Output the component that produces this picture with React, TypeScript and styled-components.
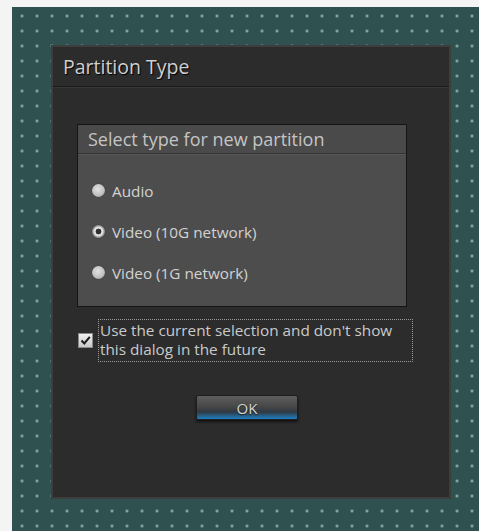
import React, { useState } from 'react';
import styled, { createGlobalStyle } from 'styled-components';

const GlobalStyle = createGlobalStyle`
  body {
    margin: 0;
    background: #f4f4f4;
    font-family: "Open Sans", "Noto Sans", sans-serif;
  }
`

const Desktop = styled.div`
  margin: 7px 0 0 12px;
  height: 524px;
  box-sizing: border-box;
  padding: 38px 0 0 39px;
  background-color: #2f5250;
  background-image: radial-gradient(circle, rgba(180, 210, 205, 0.8) 0.9px, transparent 1.7px);
  background-size: 15px 15px;
  background-position: 2.5px 1.5px;
`

const Dialog = styled.div`
  width: 400px;
  height: 454px;
  box-sizing: border-box;
  background: #2c2c2c;
  border: 2px solid #3d3d3d;
  display: flex;
  flex-direction: column;
`

const TitleBar = styled.div`
  height: 39px;
  display: flex;
  align-items: center;
  padding-left: 10px;
  border-bottom: 1px solid #181818;
  box-shadow: 0 1px 0 #383838;
  font-size: 19.5px;
  color: #cfcfcf;
  text-shadow: 1px 1px 1px #000;
`

const Body = styled.div`
  padding: 37px 0 0 24px;
  display: flex;
  flex-direction: column;
`

const GroupBox = styled.div`
  width: 330px;
  height: 183px;
  box-sizing: border-box;
  border: 1px solid #151515;
  background: #4d4d4d;
  display: flex;
  flex-direction: column;
`

const GroupHeader = styled.div`
  height: 28px;
  display: flex;
  align-items: center;
  padding-left: 10px;
  background: #4a4a4a;
  border-bottom: 1px solid #333;
  box-shadow: 0 1px 0 #575757;
  font-size: 18px;
  color: #c4c4c4;
`

const OptionList = styled.div`
  display: flex;
  flex-direction: column;
  gap: 20px;
  padding: 26px 0 0 14px;
`

const OptionRow = styled.label`
  display: flex;
  align-items: center;
  gap: 7px;
  height: 21px;
  font-size: 15.3px;
  color: #d2d2d2;
  cursor: pointer;
`

const RadioDot = styled.span<{ $checked: boolean }>`
  width: 13px;
  height: 13px;
  border-radius: 50%;
  box-sizing: border-box;
  background: ${p => p.$checked
    ? 'radial-gradient(circle, #2e2e2e 0 2.6px, #e0e0e0 3.2px 4.4px, #9a9a9a 5.6px)'
    : 'radial-gradient(circle at 45% 40%, #e2e2e2 0, #c2c2c2 55%, #8f8f8f 100%)'};
  box-shadow: 0 0 1px rgba(0, 0, 0, 0.6);
`

const ConfirmRow = styled.label`
  display: flex;
  align-items: center;
  margin-top: 12px;
  cursor: pointer;
`

const CheckBox = styled.span`
  width: 15px;
  height: 15px;
  margin: 0 5px 0 1px;
  box-sizing: border-box;
  border: 1px solid #8a8a8a;
  background: linear-gradient(#f0f0f0, #c8c8c8);
  display: flex;
  align-items: center;
  justify-content: center;
`

const ConfirmText = styled.span`
  width: 315px;
  height: 43px;
  box-sizing: border-box;
  border: 1px dotted #9a9a9a;
  padding: 1px 4px 0 1px;
  font-size: 15.3px;
  line-height: 19px;
  color: #cacaca;
`

const OkButton = styled.button`
  margin: 33px 0 0 119px;
  width: 102px;
  height: 25px;
  border: 1px solid #1e1e1e;
  border-radius: 2px;
  background: linear-gradient(#5e5e5e 0%, #484848 45%, #2f3a44 70%, #1f7fc4 100%);
  box-shadow: 0 2px 3px rgba(0, 0, 0, 0.6);
  font-family: "Open Sans", "Noto Sans", sans-serif;
  font-size: 15px;
  color: #d4d4d4;
  text-shadow: 0 1px 1px #222;
  padding: 0;
  cursor: pointer;
`

const options = ['Audio', 'Video (10G network)', 'Video (1G network)'];

export default function App() {
  const [selected, setSelected] = useState(1);
  const [remember, setRemember] = useState(true);

  return (
    <>
      <GlobalStyle />
      <Desktop>
        <Dialog>
          <TitleBar>Partition Type</TitleBar>
          <Body>
            <GroupBox>
              <GroupHeader>Select type for new partition</GroupHeader>
              <OptionList>
                {options.map((label, i) => (
                  <OptionRow key={label} onClick={() => setSelected(i)}>
                    <RadioDot $checked={selected === i} />
                    {label}
                  </OptionRow>
                ))}
              </OptionList>
            </GroupBox>
            <ConfirmRow onClick={() => setRemember(!remember)}>
              <CheckBox>
                {remember && (
                  <svg width="11" height="11" viewBox="0 0 11 11">
                    <path d="M1.5 5.5 L4.3 8.5 L9.8 1.8" fill="none" stroke="#1b1b1b" strokeWidth="2" />
                  </svg>
                )}
              </CheckBox>
              <ConfirmText>
                Use the current selection and don't show this dialog in the future
              </ConfirmText>
            </ConfirmRow>
            <OkButton>OK</OkButton>
          </Body>
        </Dialog>
      </Desktop>
    </>
  );
}
